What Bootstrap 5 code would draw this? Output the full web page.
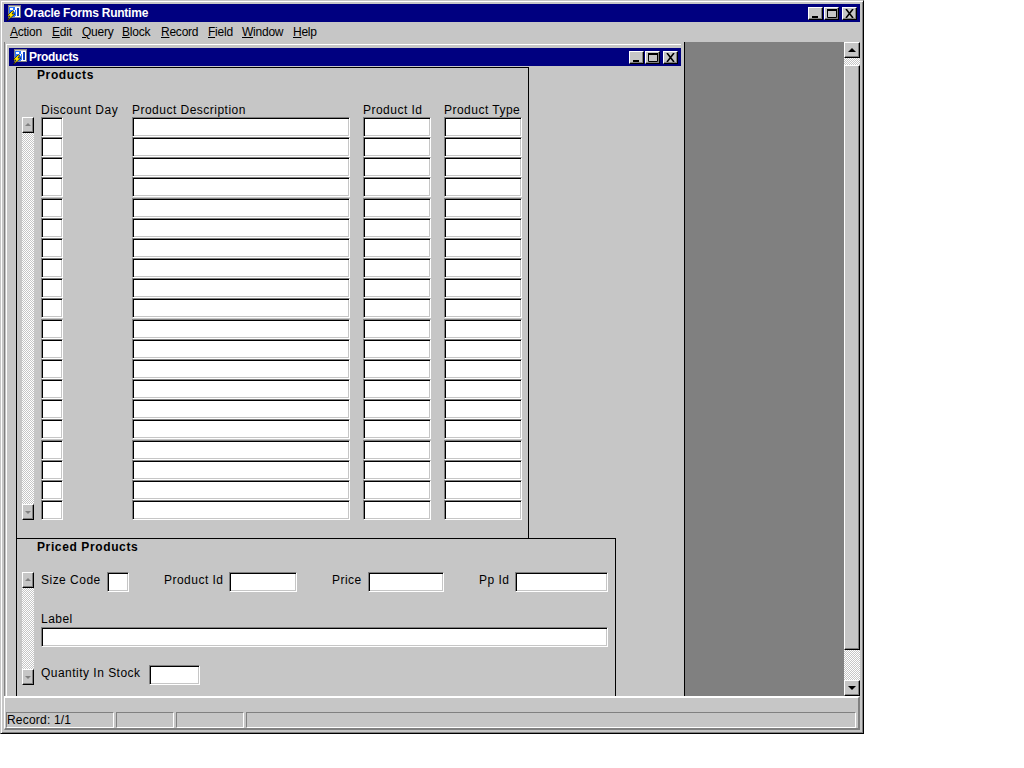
<!DOCTYPE html>
<html lang="en"><head><meta charset="utf-8"><title>Oracle Forms Runtime</title>
<link href="https://cdn.jsdelivr.net/npm/bootstrap@5.3.0/dist/css/bootstrap.min.css" rel="stylesheet">
<style>
:root{--face:#c6c6c6;--shade:#808080}
html,body{background:#fff;margin:0}
body{font:12px/14px "Liberation Sans",Arial,sans-serif;letter-spacing:.48px;color:#000}
.app{width:864px;height:734px;background:var(--face);border:1px solid;border-color:var(--face) #000 #000 var(--face);box-shadow:inset 1px 1px 0 #fff,inset -1px -1px 0 var(--shade);padding:3px}
.tbar{background:#000080;color:#fff;font-weight:700;height:18px;padding-left:2px;letter-spacing:-.23px}
.tbar svg.appicon{flex:none;margin-right:3px}
.wbtns{margin-left:auto;padding-right:3px}
.wb{width:15px;height:13px;background:var(--face);border:1px solid;border-color:#fff #000 #000 #fff;box-shadow:inset -1px -1px 0 var(--shade);padding:0;display:block}
.wb svg{display:block;margin:1px 0 0 1px}
.wbmax{margin-left:1px}
.wbgap{margin-left:3px}
.menubar{height:20px;padding:3px 0 0 6px;letter-spacing:-.24px}
.menubar span{display:block}
.m1{width:42px}.m2{width:30px}.m3{width:40px}.m4{width:39px}.m5{width:47px}.m6{width:34px}.m7{width:51px}
.workarea{height:654px;overflow:hidden}
.mdi{width:840px;background:var(--shade);overflow:hidden;height:654px}
.subwin{width:681px;height:680px;background:var(--face);box-shadow:inset 1px 0 0 #808080;border-right:1px solid #000;padding:2px 3px 0 4px}
.subwin-edge{border-top:1px solid #fff;border-left:1px solid #fff;margin-left:-2px;padding:3px 0 0 2px}
.subwin .tbar{padding-left:3px;letter-spacing:-.32px}
.subwin .tbar svg.appicon{margin-right:2px}
.wbtns-sub{padding-right:3px}
.canvas{padding-left:7px}
.frame1{width:513px;height:471px;border:1px solid #000;border-bottom:0;padding:0 0 0 5px;margin-top:1px}
.frame2{width:600px;height:170px;border:1px solid #000;padding:1px 0 0 5px}
.ftitle{font-weight:700;margin-left:15px;height:14px;letter-spacing:.62px}
.body1{margin-top:21px}
.vs{width:12px;flex:none;background:repeating-conic-gradient(var(--face) 0 25%,#fff 0 50%) 0 0/2px 2px;margin-right:7px}
.sb{width:12px;height:16px;background:var(--face);border:1px solid;border-color:#fff #000 #000 #fff;box-shadow:inset -1px -1px 0 var(--shade);position:relative}
.sb::after{content:"";position:absolute;left:2px;top:5px;border:3px solid transparent;border-top:0;border-bottom-color:var(--shade)}
.sb.dn::after{border-bottom:0;border-top:3px solid var(--shade);border-left:3px solid transparent;border-right:3px solid transparent;top:6px}
.tgrid{display:grid;grid-template-columns:91px 231px 81px 78px;grid-auto-rows:20.16px}
.thead{display:grid;grid-template-columns:91px 231px 81px 78px;height:14px;margin:0 0 0 19px}
.fld{display:block;background:#fff;border:1px solid;border-color:var(--shade) #fff #fff var(--shade);box-shadow:inset 1px 1px 0 #000,inset -1px -1px 0 var(--face);height:20px;padding:0;border-radius:0;outline:0}
.w-dd{width:22px}.w-de{width:218px}.w-id{width:68px}.w-ty{width:78px}
.f-sz{width:22px}.f-pid{width:68px}.f-pr{width:76px}.f-pp{width:93px}.f-lb{width:567px}.f-qt{width:51px}
.body2{margin-top:18px;height:113px}
.body2 .vs{height:113px}
.l1{width:66px}.l2{width:65px}.l3{width:36px}.l4{width:36px}.g35{margin-left:35px}
.flab{line-height:14px;padding-bottom:5px}
.cap{margin-top:20px;height:15px}
.rowq{margin-top:18px}
.l5{width:108px}
.vsbar{width:16px;height:654px;background:repeating-conic-gradient(var(--face) 0 25%,#fff 0 50%) 0 0/2px 2px}
.sbb{height:16px;background:var(--face);border:1px solid;border-color:#fff #000 #000 #fff;box-shadow:inset -1px -1px 0 var(--shade);position:relative;flex:none}
.sbb::after{content:"";position:absolute;left:3px;top:5px;border:4px solid transparent;border-top:0;border-bottom-color:#000}
.sbb.dn::after{border-bottom:0;border-top:4px solid #000;border-left:4px solid transparent;border-right:4px solid transparent}
.thumb{height:585px;margin-top:7px;background:var(--face);border:1px solid;border-color:#fff #000 #000 #fff;box-shadow:inset -1px -1px 0 var(--shade)}
.status{height:34px;border-top:2px solid #fff;border-left:1px solid #fff;border-right:2px solid var(--shade);border-bottom:2px solid var(--shade);padding:14px 0 0 1px;gap:2px}
.pn{height:16px;border:1px solid;border-color:var(--shade) #fff #fff var(--shade);line-height:14px;letter-spacing:.2px}
.p1{width:108px}.p2{width:58px}.p3{width:68px}.p4{width:610px}
</style></head><body>
<svg width="0" height="0" class="d-block position-absolute"><defs>
 <symbol id="ico" viewBox="0 0 15 16"><g shape-rendering="crispEdges"><path d="M2 0h13v13H2z" fill="#808080"/><path d="M3 1h11v1H3z" fill="#c6c6c6"/><path d="M3 2h6v10H3z" fill="#2a78ff"/><path d="M9 2h5v10H9z" fill="#fff"/><path d="M11 3h2v8h-2z" fill="#1040c0"/><path d="M4 3h3v2H4zM7 5h2v2H7z" fill="#fff"/><path d="M9 5h1v6H9z" fill="#2a78ff"/></g><path d="M6 6 1 11h3L1 16l8-7H6l2-3z" fill="#ffe600" stroke="#000" stroke-width=".6"/></symbol>
</defs></svg>
<div class="app">
 <div class="tbar d-flex align-items-center">
  <svg class="appicon" width="15" height="16"><use href="#ico"/></svg>
  <span>Oracle Forms Runtime</span>
  <div class="wbtns d-flex">
   <button class="wb" type="button" aria-label="Minimize"><svg width="11" height="9"><rect x="2" y="7" width="6" height="2"/></svg></button>
   <button class="wb wbmax" type="button" aria-label="Maximize"><svg width="11" height="9"><path d="M1.500 1.500h9v7h-9z" fill="none" stroke="#000"/><path d="M1 1h10" stroke="#000" stroke-width="2"/></svg></button>
   <button class="wb wbgap" type="button" aria-label="Close"><svg width="11" height="9"><path d="M2 0l7 9M9 0l-7 9" stroke="#000" stroke-width="1.600"/></svg></button>
  </div>
 </div>
 <div class="menubar d-flex">
  <span class="m1"><u>A</u>ction</span><span class="m2"><u>E</u>dit</span><span class="m3"><u>Q</u>uery</span><span class="m4"><u>B</u>lock</span><span class="m5"><u>R</u>ecord</span><span class="m6"><u>F</u>ield</span><span class="m7"><u>W</u>indow</span><span><u>H</u>elp</span>
 </div>
 <div class="workarea d-flex">
  <div class="mdi">
   <div class="subwin">
    <div class="subwin-edge">
    <div class="tbar d-flex align-items-center">
     <svg class="appicon" width="15" height="16"><use href="#ico"/></svg>
     <span>Products</span>
     <div class="wbtns wbtns-sub d-flex">
      <button class="wb" type="button" aria-label="Minimize"><svg width="11" height="9"><rect x="2" y="7" width="6" height="2"/></svg></button>
      <button class="wb wbmax" type="button" aria-label="Maximize"><svg width="11" height="9"><path d="M1.500 1.500h9v7h-9z" fill="none" stroke="#000"/><path d="M1 1h10" stroke="#000" stroke-width="2"/></svg></button>
      <button class="wb wbgap" type="button" aria-label="Close"><svg width="11" height="9"><path d="M2 0l7 9M9 0l-7 9" stroke="#000" stroke-width="1.600"/></svg></button>
     </div>
    </div>
    <div class="canvas">
     <div class="frame1">
      <div class="ftitle">Products</div>
      <div class="body1">
       <div class="thead"><span>Discount Day</span><span>Product Description</span><span>Product Id</span><span>Product Type</span></div>
       <div class="d-flex">
        <div class="vs d-flex flex-column justify-content-between"><div class="sb"></div><div class="sb dn"></div></div>
        <div class="tgrid">
         <input class="fld w-dd"><input class="fld w-de"><input class="fld w-id"><input class="fld w-ty">
         <input class="fld w-dd"><input class="fld w-de"><input class="fld w-id"><input class="fld w-ty">
         <input class="fld w-dd"><input class="fld w-de"><input class="fld w-id"><input class="fld w-ty">
         <input class="fld w-dd"><input class="fld w-de"><input class="fld w-id"><input class="fld w-ty">
         <input class="fld w-dd"><input class="fld w-de"><input class="fld w-id"><input class="fld w-ty">
         <input class="fld w-dd"><input class="fld w-de"><input class="fld w-id"><input class="fld w-ty">
         <input class="fld w-dd"><input class="fld w-de"><input class="fld w-id"><input class="fld w-ty">
         <input class="fld w-dd"><input class="fld w-de"><input class="fld w-id"><input class="fld w-ty">
         <input class="fld w-dd"><input class="fld w-de"><input class="fld w-id"><input class="fld w-ty">
         <input class="fld w-dd"><input class="fld w-de"><input class="fld w-id"><input class="fld w-ty">
         <input class="fld w-dd"><input class="fld w-de"><input class="fld w-id"><input class="fld w-ty">
         <input class="fld w-dd"><input class="fld w-de"><input class="fld w-id"><input class="fld w-ty">
         <input class="fld w-dd"><input class="fld w-de"><input class="fld w-id"><input class="fld w-ty">
         <input class="fld w-dd"><input class="fld w-de"><input class="fld w-id"><input class="fld w-ty">
         <input class="fld w-dd"><input class="fld w-de"><input class="fld w-id"><input class="fld w-ty">
         <input class="fld w-dd"><input class="fld w-de"><input class="fld w-id"><input class="fld w-ty">
         <input class="fld w-dd"><input class="fld w-de"><input class="fld w-id"><input class="fld w-ty">
         <input class="fld w-dd"><input class="fld w-de"><input class="fld w-id"><input class="fld w-ty">
         <input class="fld w-dd"><input class="fld w-de"><input class="fld w-id"><input class="fld w-ty">
         <input class="fld w-dd"><input class="fld w-de"><input class="fld w-id"><input class="fld w-ty">
        </div>
       </div>
      </div>
     </div>
     <div class="frame2">
      <div class="ftitle">Priced Products</div>
      <div class="body2 d-flex">
       <div class="vs d-flex flex-column justify-content-between"><div class="sb"></div><div class="sb dn"></div></div>
       <div>
        <div class="d-flex align-items-center">
         <span class="l1 flab">Size Code</span><input class="fld f-sz">
         <span class="l2 flab g35">Product Id</span><input class="fld f-pid">
         <span class="l3 flab g35">Price</span><input class="fld f-pr">
         <span class="l4 flab g35">Pp Id</span><input class="fld f-pp">
        </div>
        <div class="cap">Label</div>
        <input class="fld f-lb">
        <div class="d-flex align-items-center rowq"><span class="l5 flab">Quantity In Stock</span><input class="fld f-qt"></div>
       </div>
      </div>
     </div>
    </div>
    </div>
   </div>
  </div>
  <div class="vsbar d-flex flex-column">
   <div class="sbb"></div><div class="thumb"></div><div class="flex-grow-1"></div><div class="sbb dn"></div>
  </div>
 </div>
 <div class="status d-flex">
  <div class="pn p1">Record: 1/1</div><div class="pn p2"></div><div class="pn p3"></div><div class="pn p4"></div>
 </div>
</div>
<script src="https://cdn.jsdelivr.net/npm/bootstrap@5.3.0/dist/js/bootstrap.bundle.min.js"></script>
</body></html>
